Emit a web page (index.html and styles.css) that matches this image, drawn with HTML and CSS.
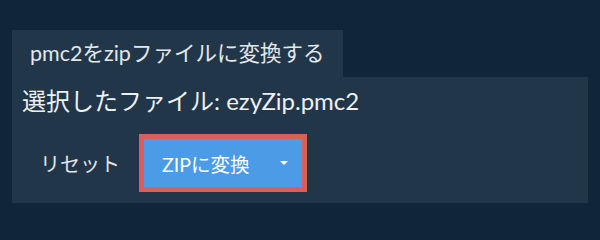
FILE: index.html
```html
<!DOCTYPE html>
<html lang="ja">
<head>
<meta charset="utf-8">
<link rel="stylesheet" href="styles.css">
</head>
<body>
<div class="wrap">
  <div class="tab">pmc2をzipファイルに変換する</div>
  <div class="panel">
    <div class="title">選択したファイル: ezyZip.pmc2</div>
    <div class="actions">
      <button class="reset">リセット</button>
      <div class="convert-outline">
        <button class="convert"><span class="label">ZIPに変換</span><span class="caret"></span></button>
      </div>
    </div>
  </div>
</div>
</body>
</html>
```
FILE: styles.css
```css
html, body {
  margin: 0;
  padding: 0;
  background: #10243a;
  font-family: Lato, "Noto Sans CJK JP", sans-serif;
  font-weight: 400;
  color: #e6e9ec;
}
.wrap {
  padding: 30px 12px 0 12px;
}
.tab {
  display: inline-block;
  background: #223649;
  height: 47px;
  line-height: 46px;
  padding: 0 19px 0 18px;
  font-size: 21.5px;
  color: #e3e7eb;
}
.panel {
  background: #223649;
  padding: 9px 10px 11px 10px;
}
.title {
  font-size: 24px;
  line-height: 30px;
  color: #eef0f2;
}
.actions {
  display: flex;
  align-items: center;
  margin-top: 18px;
}
.reset {
  background: transparent;
  border: 0;
  color: #e3e6ea;
  font-family: inherit;
  font-weight: 400;
  font-size: 20px;
  padding: 0 18px;
  height: 46px;
  margin-right: 1px;
  cursor: pointer;
}
.convert-outline {
  border: 5px solid #da5f5b;
  display: flex;
}
.convert {
  display: flex;
  align-items: center;
  background: #4b9be6;
  border: 0;
  height: 48px;
  width: 158px;
  padding: 0 0 0 18px;
  color: #ffffff;
  font-family: inherit;
  font-weight: 400;
  font-size: 19.5px;
}
.label {
  flex: 1;
  text-align: left;
}
.caret {
  width: 0;
  height: 0;
  border-left: 4px solid transparent;
  border-right: 4px solid transparent;
  border-top: 4px solid #ffffff;
  margin-right: 14px;
}
```
